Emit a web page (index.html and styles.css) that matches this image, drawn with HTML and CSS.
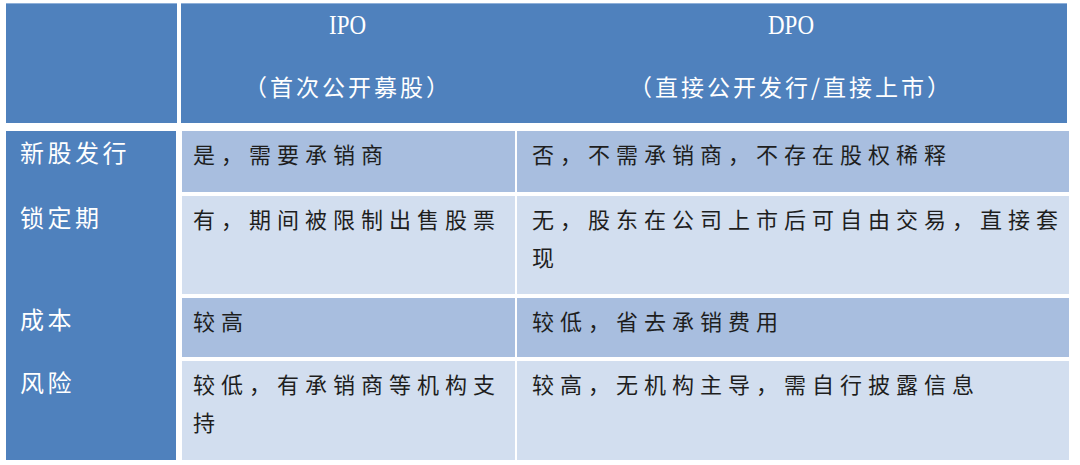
FILE: index.html
```html
<!DOCTYPE html>
<html lang="zh">
<head>
<meta charset="utf-8">
<link rel="stylesheet" href="styles.css">
</head>
<body>
<div class="table">
  <div class="head">
    <div class="hcell corner"></div>
    <div class="hcell ipo">
      <div class="h-title">IPO</div>
      <div class="h-sub">（首次公开募股）</div>
    </div>
    <div class="hcell">
      <div class="h-title">DPO</div>
      <div class="h-sub">（直接公开发行/直接上市）</div>
    </div>
  </div>
  <div class="body">
    <div class="labels">
      <div class="label">新股发行</div>
      <div class="label">锁定期</div>
      <div class="label">成本</div>
      <div class="label">风险</div>
    </div>
    <div class="cells">
      <div class="cell dark c-ipo">是，需要承销商</div>
      <div class="cell dark c-dpo">否，不需承销商，不存在股权稀释</div>
      <div class="cell light c-ipo">有，期间被限制出售股票</div>
      <div class="cell light c-dpo">无，股东在公司上市后可自由交易，直接套现</div>
      <div class="cell dark c-ipo">较高</div>
      <div class="cell dark c-dpo">较低，省去承销费用</div>
      <div class="cell light c-ipo">较低，有承销商等机构支持</div>
      <div class="cell light c-dpo">较高，无机构主导，需自行披露信息</div>
    </div>
  </div>
</div>
</body>
</html>
```
FILE: styles.css
```css
html, body {
  margin: 0;
  padding: 0;
  background: #ffffff;
}
body {
  width: 1080px;
  height: 465px;
  overflow: hidden;
  font-family: "Noto Sans CJK SC", "Noto Sans", sans-serif;
}
.table {
  padding: 3px 11px 0 6px;
}
.head {
  display: grid;
  grid-template-columns: 171px 334px 552px;
  column-gap: 2px;
  height: 120px;
  margin-bottom: 8px;
}
.hcell {
  background: #4f81bd;
  color: #ffffff;
  display: flex;
  flex-direction: column;
  align-items: center;
  padding-top: 3px;
  border-top: 1px solid #8fb0d9;
  box-sizing: border-box;
}
.hcell.ipo {
  margin-left: 2px;
  width: 334px;
}
.h-title {
  font-family: "Liberation Serif", "Noto Sans CJK SC", serif;
  font-size: 28px;
  line-height: 36px;
  height: 36px;
  transform: scaleX(0.82);
}
.h-sub {
  margin-top: 25px;
  font-size: 23px;
  line-height: 36px;
  letter-spacing: 3px;
  font-weight: 400;
}
.body {
  display: flex;
}
.labels {
  width: 170px;
  background: #4f81bd;
  display: grid;
  grid-template-rows: 61px 98px 59px 99px;
  row-gap: 4px;
}
.label {
  color: #ffffff;
  font-size: 24px;
  letter-spacing: 3.5px;
  line-height: 40px;
  padding: 1px 0 0 14px;
}
.cells {
  margin-left: 6px;
  display: grid;
  grid-template-columns: 333px 552px;
  grid-template-rows: 61px 98px 59px 99px;
  column-gap: 2px;
  row-gap: 4px;
}
.cell {
  color: #1e1e1e;
  font-size: 22px;
  letter-spacing: 6px;
  line-height: 38px;
  padding-top: 3px;
  box-sizing: border-box;
  overflow: hidden;
}
.cell.c-ipo {
  padding-left: 11px;
  padding-right: 4px;
}
.cell.c-dpo {
  padding-left: 15px;
  padding-right: 0;
}
.cell.dark {
  background: #a8bedf;
}
.cell.light {
  background: #d2deef;
}
```
